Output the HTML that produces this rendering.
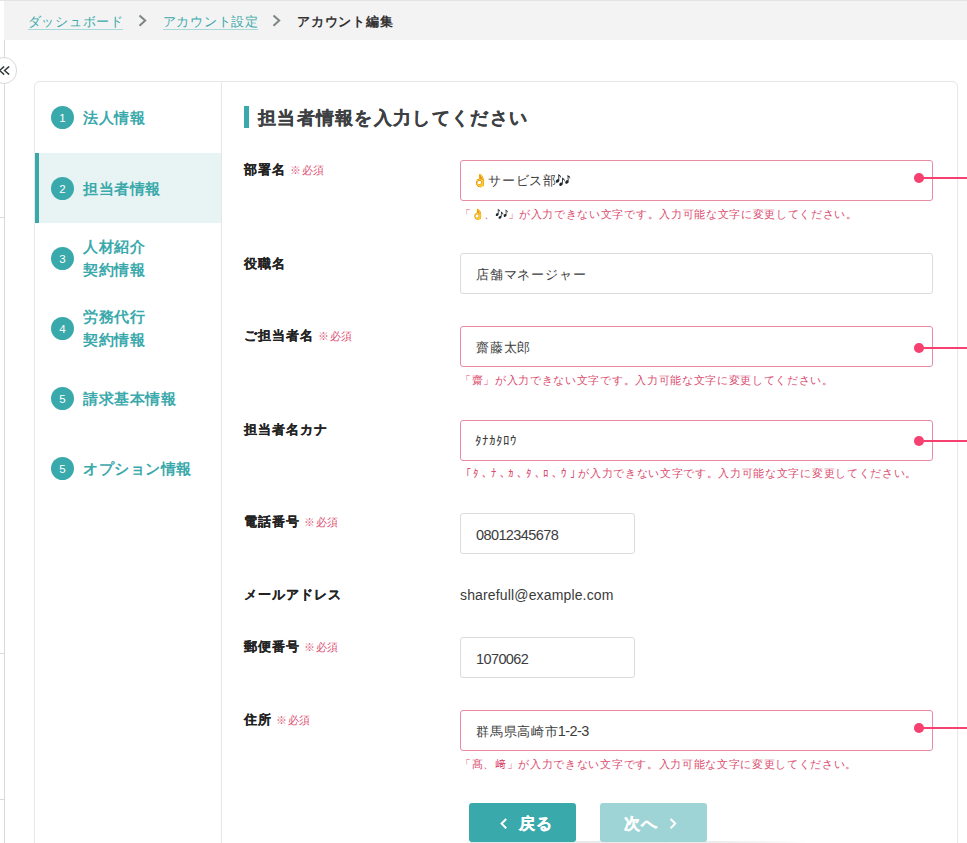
<!DOCTYPE html>
<html lang="ja">
<head>
<meta charset="utf-8">
<style>
*{box-sizing:border-box;margin:0;padding:0}
html,body{width:967px;height:843px;overflow:hidden;background:#fff}
body{position:relative;text-spacing-trim:space-all;font-kerning:none;font-family:"Liberation Sans",sans-serif;color:#333}
.abs{position:absolute}
.topline{left:0;top:0;width:967px;height:1px;background:#e4e4e4}
.header{left:4px;top:1px;width:963px;height:39px;background:#f3f3f3}
.vline{left:4px;top:40px;width:1px;height:803px;background:#d9d9d9}
.hl{left:0;width:4px;height:1px;background:#d9d9d9}
.bc{top:11.6px;font-size:13px;letter-spacing:0.8px;line-height:20px;white-space:nowrap}
.bc a{color:#3aa9ab;text-decoration:none;border-bottom:1px solid #a9d9da}
.chev{top:14px;width:8px;height:13px}
.collapse{left:-9.5px;top:57px;width:26.8px;height:26.8px;border-radius:50%;border:1px solid #d9d9d9;background:#fff}
.card{left:34px;top:81px;width:924px;height:800px;border:1px solid #e8e8e8;box-shadow:0 0 1px rgba(0,0,0,0.06);border-radius:6px;background:#fff}
.divider{left:221px;top:82px;width:1px;height:761px;background:#e6e6e6}
.step{left:35px;width:186px;height:70px}
.step.active{background:#e8f4f4}
.step.active::before{content:"";position:absolute;left:0;top:0;width:4px;height:70px;background:#3aa9ab}
.num{position:absolute;left:16px;width:23px;height:23px;border-radius:50%;background:#3aa9ab;color:#fff;font-size:11.5px;line-height:25px;text-align:center}
.stxt{position:absolute;left:48px;color:#3aa9ab;font-size:15px;letter-spacing:0.5px;font-weight:bold;line-height:23px;white-space:nowrap}
.title-bar{left:244px;top:106px;width:5px;height:22px;background:#3aa9ab}
.title{left:258px;top:104px;font-size:18px;letter-spacing:1.3px;font-weight:bold;line-height:28px;color:#3d4043;white-space:nowrap;-webkit-text-stroke:0.2px #3d4043}
.label{left:244px;font-size:13px;letter-spacing:1px;font-weight:bold;line-height:20px;color:#222;white-space:nowrap;-webkit-text-stroke:0.12px #222}
.req{color:#dc5476;font-size:11px;letter-spacing:0.6px;font-weight:normal;margin-left:4px;-webkit-text-stroke:0}
.inp{left:460px;width:473px;height:41px;border:1px solid #dcdcdc;border-radius:3px;background:#fff;font-size:13px;letter-spacing:0.8px;line-height:20px;padding:10px 15px;color:#3c3c3c;white-space:nowrap}
.inp.err{border-color:#e98ca3}
.inp.short{width:175px}
.emsg{left:460px;font-size:11px;letter-spacing:0.68px;line-height:16px;color:#db4d70;white-space:nowrap}
.dot{left:914.4px;width:9.7px;height:9.7px;border-radius:50%;background:#f6406f}
.pline{left:920px;width:47px;height:2px;background:#f6406f}
.lat{font-size:14.5px}
.dig{letter-spacing:-0.6px}
.btn{top:803px;width:107px;height:39px;border-radius:3px;color:#fff}
.btxt{top:10px;font-size:16px;letter-spacing:1px;font-weight:bold;line-height:22px;white-space:nowrap;-webkit-text-stroke:0.3px #fff}
</style>
</head>
<body>
<div class="abs topline"></div>
<div class="abs header"></div>
<div class="abs vline"></div>
<div class="abs hl" style="top:217px"></div>
<div class="abs hl" style="top:653px"></div>
<div class="abs hl" style="top:799px"></div>

<div class="abs bc" style="left:27.5px"><a>ダッシュボー<span style="letter-spacing:0">ド</span></a></div>
<div class="abs bc" style="left:162.5px"><a>アカウント設<span style="letter-spacing:0">定</span></a></div>
<svg class="abs" style="left:0;top:0" width="300" height="40" viewBox="0 0 300 40"><path d="M139.5 15.5 L145.2 20.6 L139.5 25.7 M273.5 15.5 L279.2 20.6 L273.5 25.7" fill="none" stroke="#7e8384" stroke-width="2"/></svg>
<div class="abs bc" style="left:297px;font-weight:bold;color:#333">アカウント編集</div>

<div class="abs card"></div>
<div class="abs divider"></div>
<div class="abs collapse"></div>
<svg class="abs" style="left:0;top:55px" width="20" height="30" viewBox="0 55 20 30"><path d="M3.7 66.9 L-0.4 70.5 L3.7 74.1 M8.7 66.9 L4.6 70.5 L8.7 74.1" fill="none" stroke="#353b3e" stroke-width="1.5" stroke-linecap="round" stroke-linejoin="miter"/></svg>

<div class="abs step" style="top:82px"><div class="num" style="top:24px">1</div><div class="stxt" style="top:24px">法人情報</div></div>
<div class="abs step active" style="top:153px"><div class="num" style="top:24px">2</div><div class="stxt" style="top:24px">担当者情報</div></div>
<div class="abs step" style="top:223px"><div class="num" style="top:24px">3</div><div class="stxt" style="top:12px">人材紹介<br>契約情報</div></div>
<div class="abs step" style="top:293px"><div class="num" style="top:24px">4</div><div class="stxt" style="top:12px">労務代行<br>契約情報</div></div>
<div class="abs step" style="top:363px"><div class="num" style="top:24px">5</div><div class="stxt" style="top:24px">請求基本情報</div></div>
<div class="abs step" style="top:433px"><div class="num" style="top:24px">5</div><div class="stxt" style="top:24px">オプション情報</div></div>

<div class="abs title-bar"></div>
<div class="abs title">担当者情報を入力してください</div>

<div class="abs label" style="top:160px">部署名<span class="req">※必須</span></div>
<div class="abs inp err" style="top:160px"><span style="margin-left:-4px;letter-spacing:0">👌</span>サービス部<span style="margin-left:-2px;filter:brightness(0.35)">🎶</span></div>
<div class="abs emsg" style="top:206px"><span style="letter-spacing:-0.4px">「👌、<span style="filter:brightness(0.35)">🎶</span>」</span>が入力できない文字です。入力可能な文字に変更してください。</div>
<div class="abs dot" style="top:173.3px"></div><div class="abs pline" style="top:177.2px"></div>

<div class="abs label" style="top:254px">役職名</div>
<div class="abs inp" style="top:253px;padding-top:11px">店舗マネージャー</div>

<div class="abs label" style="top:326px">ご担当者名<span class="req">※必須</span></div>
<div class="abs inp err" style="top:326px;padding-top:11px">齋藤太郎</div>
<div class="abs emsg" style="top:372px">「齋」が入力できない文字です。入力可能な文字に変更してください。</div>
<div class="abs dot" style="top:343px"></div><div class="abs pline" style="top:346.9px"></div>

<div class="abs label" style="top:420px">担当者名カナ</div>
<div class="abs inp err" style="top:420px;letter-spacing:0;padding-left:14px">ﾀﾅｶﾀﾛｳ</div>
<div class="abs emsg" style="top:465px"><span style="margin-left:4.5px;letter-spacing:2.75px">「ﾀ、ﾅ、ｶ、ﾀ、ﾛ、ｳ」</span>が入力できない文字です。入力可能な文字に変更してください。</div>
<div class="abs dot" style="top:436px"></div><div class="abs pline" style="top:439.9px"></div>

<div class="abs label" style="top:512px">電話番号<span class="req">※必須</span></div>
<div class="abs inp short" style="top:513px;padding-top:11px"><span class="lat dig">08012345678</span></div>

<div class="abs label" style="top:585px">メールアドレス</div>
<div class="abs" style="left:460px;top:585px;font-size:14px;letter-spacing:0.15px;line-height:20px;color:#3a3a3a">sharefull@example.com</div>

<div class="abs label" style="top:637px">郵便番号<span class="req">※必須</span></div>
<div class="abs inp short" style="top:637px;padding-top:11px"><span class="lat dig">1070062</span></div>

<div class="abs label" style="top:710px">住所<span class="req">※必須</span></div>
<div class="abs inp err" style="top:710px">群馬県高崎市<span class="lat dig" style="margin-left:-1px">1-2-3</span></div>
<div class="abs emsg" style="top:756px">「髙、﨑」が入力できない文字です。入力可能な文字に変更してください。</div>
<div class="abs dot" style="top:723.2px"></div><div class="abs pline" style="top:727.1px"></div>

<div class="abs" style="left:470px;top:841px;width:340px;height:2px;background:linear-gradient(to right,rgba(0,0,0,0.09) 0%,rgba(0,0,0,0.08) 70%,rgba(0,0,0,0) 100%);filter:blur(0.6px)"></div>
<div class="abs btn" style="left:469px;background:#3aa9ab"><svg class="abs" style="left:31px;top:15px" width="8" height="12" viewBox="0 0 8 12"><path d="M6.2 1 L1.6 5.6 L6.2 10.2" fill="none" stroke="#fff" stroke-width="2"/></svg><span class="abs btxt" style="left:50px">戻る</span></div>
<div class="abs btn" style="left:600px;background:#9fd4d6"><span class="abs btxt" style="left:24px">次へ</span><svg class="abs" style="left:69px;top:15px" width="8" height="12" viewBox="0 0 8 12"><path d="M1.6 1 L6.2 5.6 L1.6 10.2" fill="none" stroke="#fff" stroke-width="2"/></svg></div>
</body>
</html>
